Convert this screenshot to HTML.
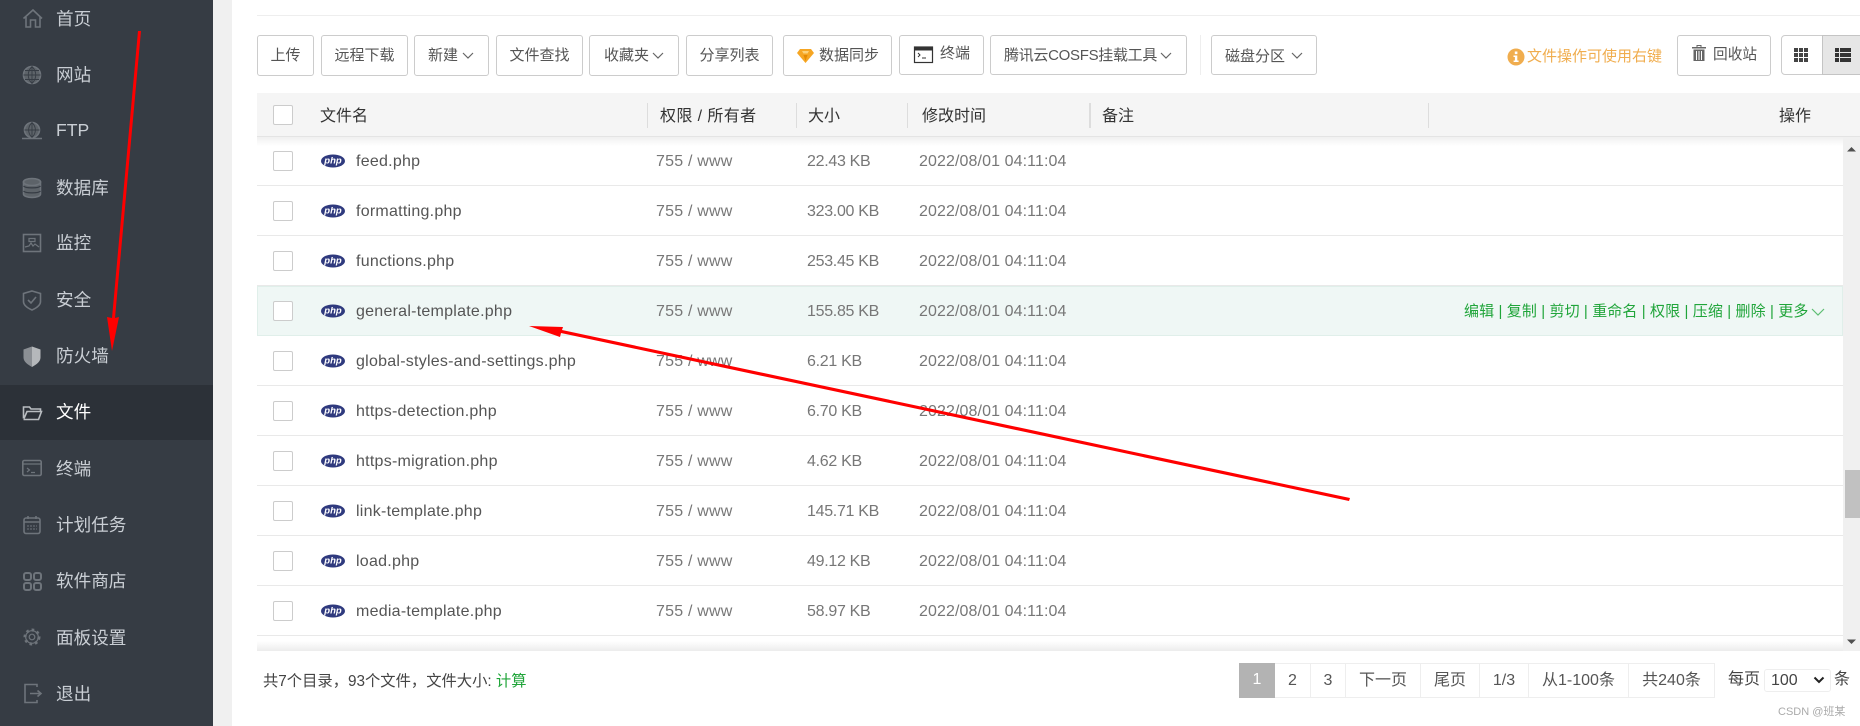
<!DOCTYPE html>
<html lang="zh"><head><meta charset="utf-8"><title>文件</title>
<style>
*{box-sizing:border-box;margin:0;padding:0}
html,body{width:1860px;height:726px;overflow:hidden;background:#fff}
body{position:relative;font-family:"Liberation Sans","Noto Sans CJK SC",sans-serif;color:#555}
.a,.m,.b,.h,.r,.r *,.p,.t{position:absolute;white-space:nowrap}
#side{position:absolute;left:0;top:0;width:213px;height:726px;background:#363c44}
#gap{position:absolute;left:213px;top:0;width:19px;height:726px;background:#f0f0f0}
.m{left:56px;font-size:17.6px;line-height:24px;color:#c9ced4}
.b{top:35px;height:41px;line-height:39px;border:1px solid #ccc;border-radius:3px;background:#fff;font-size:15px;text-align:center;color:#555}
.h{top:105px;font-size:16px;line-height:24px;color:#333}
.s{position:absolute;top:103px;width:1px;height:25px;background:#ddd}
.r{left:257px;width:1586px;height:50px;border-bottom:1px solid #e9e9e9;background:#fff}
.r .c{left:16px;top:15px;width:20px;height:20px;border:1px solid #ccc;border-radius:2px;background:#fff}
.r svg{left:64px;top:18px}
.r .n{left:99px;top:14px;font-size:16px;line-height:24px;color:#555;letter-spacing:.25px}
.r .o{left:399px;top:14px;font-size:16px;line-height:24px;color:#777;letter-spacing:.2px}
.r .k{left:550px;top:14px;font-size:16px;line-height:24px;color:#777;letter-spacing:-.3px}
.r .d{left:662px;top:14px;font-size:16px;line-height:24px;color:#777;letter-spacing:.1px}
.p{top:663px;height:35px;line-height:33px;border:1px solid #eee;border-left:0;font-size:16px;text-align:center;color:#555}
.g{color:#20a53a}
</style></head><body>
<div id="side"></div><div id="gap"></div>
<div class="a" style="left:0;top:385px;width:213px;height:55px;background:#2c3138"></div>
<div class="m" style="top:7px">首页</div>
<div class="m" style="top:63px">网站</div>
<div class="m" style="top:118px">FTP</div>
<div class="m" style="top:176px">数据库</div>
<div class="m" style="top:231px">监控</div>
<div class="m" style="top:288px">安全</div>
<div class="m" style="top:344px">防火墙</div>
<div class="m" style="top:400px;color:#fff">文件</div>
<div class="m" style="top:457px">终端</div>
<div class="m" style="top:513px">计划任务</div>
<div class="m" style="top:569px">软件商店</div>
<div class="m" style="top:626px">面板设置</div>
<div class="m" style="top:682px">退出</div>
<svg class="a" style="left:0;top:0" width="213" height="726" fill="none" stroke="#6e747b" stroke-width="1.6">
<path d="M23.500 18.500 33 10l9 8.500M26 17v10h4.500v-7h5v7h4.500V17"/>
<g><circle cx="32" cy="75" r="8.500" fill="#5d6369"/><path stroke="#363c44" stroke-width=".9" d="M23.500 75h17M25 70.500h14M25 79.500h14M32 66.500v17M32 66.500c-5 5-5 12 0 17M32 66.500c5 5 5 12 0 17"/></g>
<g><circle cx="32" cy="130" r="7.500" fill="#5d6369"/><path stroke="#363c44" stroke-width=".9" d="M24.500 130h15M32 122.500v15M32 122.500c-4.500 4.500-4.500 10.500 0 15M32 122.500c4.500 4.500 4.500 10.500 0 15"/><path d="M22 138.500h20"/></g>
<g fill="#5d6369"><path d="M23.500 182v12c0 2 4 3.500 8.500 3.500s8.500-1.500 8.500-3.500v-12z"/><ellipse cx="32" cy="182" rx="8.500" ry="3.500"/><path stroke="#363c44" stroke-width="1.200" d="M23.500 186c2 2.500 15 2.500 17 0M23.500 191c2 2.500 15 2.500 17 0"/></g>
<g><rect x="23.500" y="234.500" width="17" height="17"/><path stroke-width="1.200" d="M25 247l4-1 2-3 2 3 2-2 4 3M29 238.500h6v3h-6z"/></g>
<g><path d="M32 291l8.500 2.500v8c0 4-4 6.500-8.500 8.500-4.500-2-8.500-4.500-8.500-8.500v-8z"/><path d="M28 300l3 3 5-6"/></g>
<g stroke="none"><path fill="#8b8f94" d="M32 346.500l-8.500 3v8c0 4 4 7 8.500 9.500z"/><path fill="#b5b8bb" d="M32 346.500l8.500 3v8c0 4-4 7-8.500 9.500z"/></g>
<path stroke="#b9bdc1" d="M23.500 418.500V407h6l1.500 2h9.500v2.500M23.500 419.500h15l3-8H27l-3 7"/>
<g><rect x="22.800" y="460.500" width="18.400" height="15" rx="1.500"/><path stroke-width="1.200" d="M23 464h18M27 468l2.500 2-2.500 2M31 472.500h4"/></g>
<g><rect x="24" y="518" width="16" height="15.500" rx="2"/><path d="M24 522h16M28 516v3M36 516v3"/><path stroke-width="1" stroke-dasharray="2 1" d="M27 526h10M27 529h10"/></g>
<g stroke-width="2"><rect x="24" y="573" width="7" height="7" rx="2"/><rect x="34" y="573" width="7" height="7" rx="2"/><rect x="24" y="583" width="7" height="7" rx="2"/><rect x="34" y="583" width="7" height="7" rx="2"/></g>
<g stroke-width="3" stroke-dasharray="2.500 2.900"><circle cx="32" cy="637" r="7"/></g><circle cx="32" cy="637" r="6.300" stroke-width="1.200"/><circle cx="32" cy="637" r="2.800" stroke-width="1.200"/>
<path d="M37 687v-2.500H25v18h12V700M30 693.500h10M37.500 690.500l3.500 3-3.500 3"/>
</svg>

<div class="a" style="left:257px;top:15px;width:1603px;height:1px;background:#eee"></div>

<div class="b" style="left:257px;width:57px">上传</div>
<div class="b" style="left:321px;width:87px">远程下载</div>
<div class="b" style="left:414px;width:75px;text-align:left;padding-left:13px">新建</div>
<div class="b" style="left:496px;width:87px">文件查找</div>
<div class="b" style="left:589px;width:90px;text-align:left;padding-left:14px">收藏夹</div>
<div class="b" style="left:686px;width:87px">分享列表</div>
<div class="b" style="left:783px;width:109px;text-align:left;padding-left:35px">数据同步</div>
<div class="b" style="left:899px;width:85px;height:40px;line-height:36px;text-align:left;padding-left:40px">终端</div>
<div class="b" style="left:990px;width:197px;height:40px;text-align:left;padding-left:13px;white-space:nowrap;letter-spacing:-.3px">腾讯云COSFS挂载工具</div>
<div class="a" style="left:1200px;top:35px;width:1px;height:40px;background:#eee"></div>
<div class="b" style="left:1211px;width:106px;height:40px;text-align:left;padding-left:13px;line-height:41px">磁盘分区</div>
<svg class="a" style="left:0;top:0" width="1860" height="100" fill="none" stroke="#666" stroke-width="1.200">
<path d="M463 53l5 5 5-5M653 53l5 5 5-5M1161 53l5 5 5-5M1292 53l5 5 5-5"/>
<g stroke="none"><path fill="#f6a623" d="M800 49h11l3 4-8.500 10L797 53z"/><path fill="#fbd27a" d="M802 51h7l-1.500 2.500h-4z"/><path fill="#e58a00" d="M803.500 55h4l-2 6z"/></g>
<g><rect x="914.500" y="47" width="18" height="15.500" fill="#fff" stroke="#333" stroke-width="1.200"/><path fill="#333" stroke="none" d="M914 47h19v3.500h-19z"/><path stroke="#333" stroke-width="1" d="M918 53l2 2-2 2M922 58h4"/></g>
</svg>

<svg class="a" style="left:1507px;top:48px" width="18" height="18"><circle cx="9" cy="9" r="8.500" fill="#f0ad4e"/><rect x="7.800" y="3.500" width="2.600" height="2.600" fill="#fff"/><path d="M6.500 7.500h3.800v5h1.300v1.500h-5v-1.500h1.300V9H6.500z" fill="#fff"/></svg>
<div class="a" style="left:1527px;top:45px;font-size:15px;line-height:24px;color:#f0ad4e">文件操作可使用右键</div>
<div class="b" style="left:1677px;width:94px;text-align:left;padding-left:35px;font-size:14.700px">回收站</div>
<svg class="a" style="left:1691px;top:44px" width="16" height="18" fill="#666"><path d="M1 3h14v1.500H1zM5.500 1h5v2h-1V2h-3v1h-1zM2.500 5.500h11V17h-11z"/><path stroke="#fff" d="M5.500 7v9M8 7v9M10.500 7v9"/></svg>
<div class="a" style="left:1781px;top:35px;width:42px;height:40px;border:1px solid #ccc;border-radius:4px 0 0 4px;background:#fff"></div>
<div class="a" style="left:1822px;top:35px;width:38px;height:40px;border:1px solid #c4c4c4;border-right:0;background:#e6e6e6"></div>
<svg class="a" style="left:1794px;top:48px" width="15" height="15" fill="#444"><path d="M0 0h4v4H0zM5 0h4v4H5zM10 0h4v4h-4zM0 5h4v4H0zM5 5h4v4H5zM10 5h4v4h-4zM0 10h4v4H0zM5 10h4v4H5zM10 10h4v4h-4z"/></svg>
<svg class="a" style="left:1835px;top:48px" width="16" height="15" fill="#333"><path d="M0 0h4v4H0zM5 0h11v4H5zM0 5h4v4H0zM5 5h11v4H5zM0 10h4v4H0zM5 10h11v4H5z"/></svg>

<div class="r" style="top:136px"><div class="c"></div><svg width="24" height="14"><ellipse cx="12" cy="7" rx="12" ry="6.500" fill="#2f3a7e"/><text x="12" y="9.500" text-anchor="middle" font-family="Liberation Sans" font-size="9.500" font-style="italic" font-weight="bold" fill="#fff">php</text></svg><span class="n">feed.php</span><span class="o">755 / www</span><span class="k">22.43 KB</span><span class="d">2022/08/01 04:11:04</span></div>
<div class="r" style="top:186px"><div class="c"></div><svg width="24" height="14"><ellipse cx="12" cy="7" rx="12" ry="6.500" fill="#2f3a7e"/><text x="12" y="9.500" text-anchor="middle" font-family="Liberation Sans" font-size="9.500" font-style="italic" font-weight="bold" fill="#fff">php</text></svg><span class="n">formatting.php</span><span class="o">755 / www</span><span class="k">323.00 KB</span><span class="d">2022/08/01 04:11:04</span></div>
<div class="r" style="top:236px"><div class="c"></div><svg width="24" height="14"><ellipse cx="12" cy="7" rx="12" ry="6.500" fill="#2f3a7e"/><text x="12" y="9.500" text-anchor="middle" font-family="Liberation Sans" font-size="9.500" font-style="italic" font-weight="bold" fill="#fff">php</text></svg><span class="n">functions.php</span><span class="o">755 / www</span><span class="k">253.45 KB</span><span class="d">2022/08/01 04:11:04</span></div>
<div class="r" style="top:286px;height:50px;background:#eff7f5;border:1px solid #e0efea"><div class="c" style="left:15px;top:14px"></div><svg width="24" height="14" style="left:63px;top:17px"><ellipse cx="12" cy="7" rx="12" ry="6.500" fill="#2f3a7e"/><text x="12" y="9.500" text-anchor="middle" font-family="Liberation Sans" font-size="9.500" font-style="italic" font-weight="bold" fill="#fff">php</text></svg><span class="n g" style="left:98px;top:13px">general-template.php</span><span class="o" style="left:398px;top:13px">755 / www</span><span class="k" style="left:549px;top:13px">155.85 KB</span><span class="d" style="left:661px;top:13px">2022/08/01 04:11:04</span><span class="g" style="left:1206px;top:13px;font-size:15px;line-height:24px;letter-spacing:.1px">编辑 | 复制 | 剪切 | 重命名 | 权限 | 压缩 | 删除 | 更多</span><svg width="14" height="8" style="left:1553px;top:21px" fill="none" stroke="#20a53a" stroke-opacity=".7" stroke-width="1.200"><path d="M1 1l6 6 6-6"/></svg></div>
<div class="r" style="top:336px"><div class="c"></div><svg width="24" height="14"><ellipse cx="12" cy="7" rx="12" ry="6.500" fill="#2f3a7e"/><text x="12" y="9.500" text-anchor="middle" font-family="Liberation Sans" font-size="9.500" font-style="italic" font-weight="bold" fill="#fff">php</text></svg><span class="n">global-styles-and-settings.php</span><span class="o">755 / www</span><span class="k">6.21 KB</span><span class="d">2022/08/01 04:11:04</span></div>
<div class="r" style="top:386px"><div class="c"></div><svg width="24" height="14"><ellipse cx="12" cy="7" rx="12" ry="6.500" fill="#2f3a7e"/><text x="12" y="9.500" text-anchor="middle" font-family="Liberation Sans" font-size="9.500" font-style="italic" font-weight="bold" fill="#fff">php</text></svg><span class="n">https-detection.php</span><span class="o">755 / www</span><span class="k">6.70 KB</span><span class="d">2022/08/01 04:11:04</span></div>
<div class="r" style="top:436px"><div class="c"></div><svg width="24" height="14"><ellipse cx="12" cy="7" rx="12" ry="6.500" fill="#2f3a7e"/><text x="12" y="9.500" text-anchor="middle" font-family="Liberation Sans" font-size="9.500" font-style="italic" font-weight="bold" fill="#fff">php</text></svg><span class="n">https-migration.php</span><span class="o">755 / www</span><span class="k">4.62 KB</span><span class="d">2022/08/01 04:11:04</span></div>
<div class="r" style="top:486px"><div class="c"></div><svg width="24" height="14"><ellipse cx="12" cy="7" rx="12" ry="6.500" fill="#2f3a7e"/><text x="12" y="9.500" text-anchor="middle" font-family="Liberation Sans" font-size="9.500" font-style="italic" font-weight="bold" fill="#fff">php</text></svg><span class="n">link-template.php</span><span class="o">755 / www</span><span class="k">145.71 KB</span><span class="d">2022/08/01 04:11:04</span></div>
<div class="r" style="top:536px"><div class="c"></div><svg width="24" height="14"><ellipse cx="12" cy="7" rx="12" ry="6.500" fill="#2f3a7e"/><text x="12" y="9.500" text-anchor="middle" font-family="Liberation Sans" font-size="9.500" font-style="italic" font-weight="bold" fill="#fff">php</text></svg><span class="n">load.php</span><span class="o">755 / www</span><span class="k">49.12 KB</span><span class="d">2022/08/01 04:11:04</span></div>
<div class="r" style="top:586px"><div class="c"></div><svg width="24" height="14"><ellipse cx="12" cy="7" rx="12" ry="6.500" fill="#2f3a7e"/><text x="12" y="9.500" text-anchor="middle" font-family="Liberation Sans" font-size="9.500" font-style="italic" font-weight="bold" fill="#fff">php</text></svg><span class="n">media-template.php</span><span class="o">755 / www</span><span class="k">58.97 KB</span><span class="d">2022/08/01 04:11:04</span></div>

<div class="a" style="left:257px;top:93px;width:1603px;height:44px;background:#f5f5f5;border-bottom:1px solid #e4e4e4"></div>
<div class="a" style="left:257px;top:137px;width:1586px;height:9px;background:linear-gradient(#f0f0f0,rgba(255,255,255,0))"></div>
<div class="a" style="left:273px;top:105px;width:20px;height:20px;border:1px solid #ccc;border-radius:2px;background:#fff"></div>
<div class="h" style="left:320px">文件名</div>
<div class="h" style="left:660px;letter-spacing:.4px">权限 / 所有者</div>
<div class="h" style="left:808px">大小</div>
<div class="h" style="left:922px">修改时间</div>
<div class="h" style="left:1102px">备注</div>
<div class="h" style="left:1779px">操作</div>
<div class="s" style="left:647px"></div><div class="s" style="left:796px"></div><div class="s" style="left:907px"></div><div class="s" style="left:1089px;width:2px"></div><div class="s" style="left:1428px"></div>

<div class="a" style="left:257px;top:636px;width:1586px;height:15px;background:linear-gradient(#fff 35%,#ececec)"></div>
<div class="a" style="left:1843px;top:137px;width:17px;height:514px;background:#f0f0f0"></div>
<div class="a" style="left:1845px;top:470px;width:15px;height:48px;background:#c1c1c1"></div>
<svg class="a" style="left:1843px;top:137px" width="17" height="514" fill="#505050"><path d="M8.500 10l4.500 4.500H4zM8.500 507l-4.500-4.500h9z"/></svg>

<div class="a" style="left:263px;top:670px;font-size:15.300px;line-height:24px;color:#444">共7个目录，93个文件，文件大小: <span class="g">计算</span></div>

<div class="a" style="left:1239px;top:663px;width:36px;height:35px;line-height:33px;background:#b3b3b3;color:#fff;font-size:16px;text-align:center">1</div>
<div class="p" style="left:1275px;width:36px">2</div>
<div class="p" style="left:1311px;width:35px">3</div>
<div class="p" style="left:1346px;width:75px">下一页</div>
<div class="p" style="left:1421px;width:59px">尾页</div>
<div class="p" style="left:1480px;width:49px">1/3</div>
<div class="p" style="left:1529px;width:100px">从1-100条</div>
<div class="p" style="left:1629px;width:86px">共240条</div>
<div class="a" style="left:1728px;top:668px;font-size:16px;line-height:24px;color:#444">每页</div>
<div class="a" style="left:1764px;top:669px;width:67px;height:23px;border:1px solid #eee;border-radius:3px;font-size:16px;line-height:21px;padding-left:6px;color:#444">100</div>
<svg class="a" style="left:1813px;top:676px" width="12" height="9" fill="none" stroke="#222" stroke-width="2"><path d="M1.500 1.500l4.500 4.500 4.500-4.500"/></svg>
<div class="a" style="left:1834px;top:668px;font-size:16px;line-height:24px;color:#444">条</div>
<div class="a" style="left:1778px;top:705px;font-size:11px;line-height:14px;color:#aaa">CSDN @班某</div>

<svg class="a" style="left:0;top:0" width="1860" height="726" fill="#f00">
<path d="M138 31h3L115 318l4-1-7 34-5-34 5 1z"/>
<path d="M529 326l34 1-1 3L1350 498l-1 3L561 333l-1 4z"/>
</svg>
</body></html>
